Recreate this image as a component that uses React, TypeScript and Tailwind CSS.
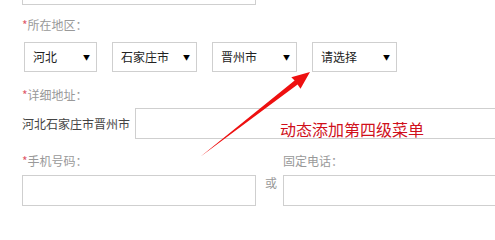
const font = { fontFamily: '"Noto Sans CJK SC", "Microsoft YaHei", sans-serif' };

function Select({ text, width }: { text: string; width: string }) {
  return (
    <div
      className={`${width} h-[30px] border border-[#cfcfcf] bg-white flex items-center justify-between pl-[8px] pr-[6px] text-[12px] text-[#222]`}
    >
      <span>{text}</span>
      <span className="text-[7px] text-black">▼</span>
    </div>
  );
}

function Label({ text, required }: { text: string; required?: boolean }) {
  return (
    <div className="h-[16px] leading-[16px] text-[12px] text-[#999]">
      {required && <span className="text-[#e05a6a]">*</span>}
      {text}
    </div>
  );
}

export default function App() {
  return (
    <div
      className="relative w-[495px] h-[212px] overflow-hidden bg-white pl-[22px]"
      style={font}
    >
      <div className="h-[5px] w-[234px] border border-t-0 border-[#cfcfcf]" />

      <div className="mt-[12px]">
        <Label text="所在地区：" required />
      </div>

      <div className="mt-[9px] flex pl-[2px] gap-[15px]">
        <Select text="河北" width="w-[73px]" />
        <Select text="石家庄市" width="w-[85px]" />
        <Select text="晋州市" width="w-[85px]" />
        <Select text="请选择" width="w-[85px]" />
      </div>

      <div className="mt-[15px]">
        <Label text="详细地址：" required />
      </div>

      <div className="mt-[5px] flex items-center gap-[5px]">
        <span className="text-[12px] text-[#444] whitespace-nowrap">河北石家庄市晋州市</span>
        <div className="h-[31px] flex-1 border border-[#cfcfcf] border-r-0" />
      </div>

      <div className="mt-[14px] flex">
        <div className="w-[261px]">
          <Label text="手机号码：" required />
        </div>
        <Label text="固定电话：" />
      </div>

      <div className="mt-[6px] flex items-start">
        <div className="h-[31px] w-[234px] border border-[#cfcfcf]" />
        <span className="w-[27px] pl-[9px] leading-[16px] text-[12px] text-[#999]">或</span>
        <div className="h-[31px] flex-1 border border-[#cfcfcf] border-r-0" />
      </div>

      <div className="absolute left-[280px] top-[119px] text-[16px] leading-[20px] text-[#d0101b]">
        动态添加第四级菜单
      </div>

      <svg className="absolute left-0 top-0" width="495" height="212">
        <polygon
          points="200,157 294.6,80.6 291.3,77.3 310,72 300.5,88.7 297.6,84.4"
          fill="#ee1010"
        />
      </svg>
    </div>
  );
}
